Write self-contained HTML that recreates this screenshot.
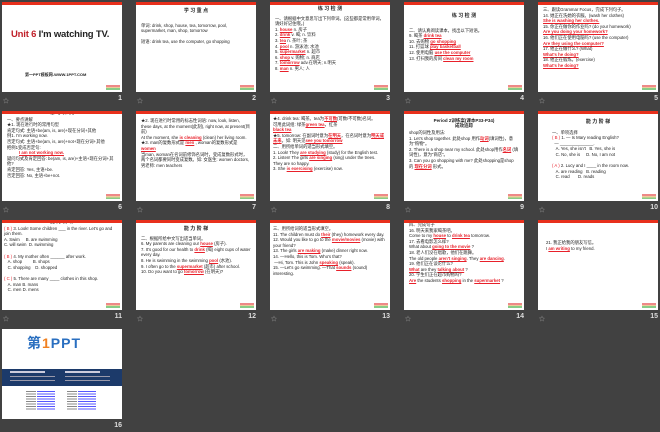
<!DOCTYPE html>
<html><head><meta charset="utf-8"><style>
*{margin:0;padding:0;box-sizing:border-box}
body{width:660px;height:432px;background:#414141;position:relative;overflow:hidden;font-family:"Liberation Sans","Noto Sans CJK SC",sans-serif}
.s{position:absolute;width:120px;height:90px;background:#fff;overflow:hidden;font-size:4.3px;line-height:5.6px;color:#222}
.s.r::before{content:"";position:absolute;left:0;top:0;width:120px;height:3px;background:#e8301c}
.n{position:absolute;color:#ddd;font-size:7px;font-weight:bold;width:20px;text-align:right}
.st{position:absolute;color:#aaa;font-size:6px}
.t{text-align:center;font-weight:bold;font-size:5px;margin-top:7px}
.c{padding:0 5px}
.red{color:#e8202a;font-weight:bold;text-decoration:underline}
.lg{position:absolute;right:2px;bottom:2px;width:14px;height:7px;background:linear-gradient(#fff 0 30%,#e88 30% 55%,#ec9 55% 75%,#8c8 75%)}
</style></head><body>

<!-- row 1 -->
<div class="s r" style="left:2px;top:2px">
<div style="position:absolute;left:9px;top:27px;font-size:9.5px;font-weight:bold;line-height:12px;letter-spacing:-.2px"><span style="color:#c0202a">Unit 6</span> I'm watching TV.</div>
<div style="position:absolute;left:23px;top:70px;font-size:4px;font-weight:bold">第一PPT模板网-WWW.1PPT.COM</div><div class="lg"></div></div>
<div class="s r" style="left:136px;top:2px"><div class="t">学 习 重 点</div>
<div class="c" style="margin-top:8px">单词: drink, shop, house, tea, tomorrow, pool, supermarket, man, shop, tomorrow</div>
<div class="c" style="margin-top:5px">短语: drink tea, use the computer, go shopping</div><div class="lg"></div></div>
<div class="s r" style="left:270px;top:2px"><div class="t" style="margin-top:5px">练 习 检 测</div>
<div class="c" style="margin-top:3px">一、请根据中文意思写出下列单词。(这些都是常用单词，请好好记住哦。)<br>1. <span class="red">house</span> n. 房子<br>2. <span class="red">drink</span> v. 喝; n. 饮料<br>3. <span class="red">tea</span> n. 茶叶; 茶<br>4. <span class="red">pool</span> n. 游泳池; 水池<br>5. <span class="red">supermarket</span> n. 超市<br>6. <span class="red">shop</span> v. 购物; n. 商店<br>7. <span class="red">tomorrow</span> adv.在明天; n.明天<br>8. <span class="red">man</span> n. 男人; 人</div><div class="lg"></div></div>
<div class="s r" style="left:404px;top:2px"><div class="t" style="margin-top:12px">练 习 检 测</div>
<div class="c" style="margin-top:8px">二、请认真阅读课本，找出以下短语。<br>9. 喝茶 <span class="red">drink tea</span><br>10. 去购物 <span class="red">go shopping</span><br>11. 打篮球 <span class="red">play basketball</span><br>12. 使用电脑 <span class="red">use the computer</span><br>13. 打扫我的房间 <span class="red">clean my room</span></div><div class="lg"></div></div>
<div class="s r" style="left:538px;top:2px"><div class="c" style="margin-top:5px">三、跟读Grammar Focus，完成下列句子。<br>14. 她正在洗她的衣服。(wash her clothes)<br><span class="red">She is washing her clothes.</span><br>15. 你正在做你的作业吗? (do your homework)<br><span class="red">Are you doing your homework?</span><br>16. 他们正在使用电脑吗? (use the computer)<br><span class="red">Are they using the computer?</span><br>17. 他正在做什么? (What)<br><span class="red">What's he doing?</span><br>18. 他正在锻炼。(exercise)<br><span class="red">What's he doing?</span></div><div class="lg"></div></div>

<!-- row 2 -->
<div class="s r" style="left:2px;top:111px"><div class="t" style="margin-top:0">思 考 探 究</div>
<div class="c" style="margin-top:0">一、要点讲解<br>★1. 现在进行时的常用句型<br>肯定句式: 主语+be(am, is, are)+现在分词+其他<br>例1. I'm working now.<br>否定句式: 主语+be(am, is, are)+not+现在分词+其他<br>把例1变成否定句:<br><span class="red" style="margin-left:12px">I am not working now.</span><br>疑问句式及肯定回答: be(am, is, are)+主语+现在分词+其他?<br>肯定回答: Yes, 主语+be.<br>否定回答: No, 主语+be+not.</div><div class="lg"></div></div>
<div class="s r" style="left:136px;top:111px"><div class="c" style="margin-top:7px">★2. 现在进行时常用的标志性词语: now, look, listen, these days, at the moment(此刻), right now, at present(目前)<br>At the moment, she <span class="red">is cleaning</span> (clean) her living room.<br>★3. man的复数形式是 <span class="red">men</span> , woman的复数形式是 <span class="red">women</span><br>当man, woman在名词前修饰名词时，变成复数形式时，两个名词都要同时变成复数。如: 女医生: women doctors, 男老师: men teachers</div><div class="lg"></div></div>
<div class="s r" style="left:270px;top:111px"><div class="c" style="margin-top:5px;padding-left:3px">★4. drink tea: 喝茶。tea为<span class="red">不可数</span>(可数/不可数)名词。<br>可用此词组: 绿茶<span class="red">green tea</span>，红茶<br><span class="red">black tea</span><br>★5. tomorrow: 在副词时意为<span class="red">在明天</span>，在名词时意为<span class="red">明天或未来</span>。如: 明天见<span class="red">see you tomorrow</span><br>二、用所给单词的适当形式填空。<br>1. Look! They <span class="red">are studying</span> (study) for the English test.<br>2. Listen! The girls <span class="red">are singing</span> (sing) under the trees. They are so happy.<br>3. She <span class="red">is exercising</span> (exercise) now.</div><div class="lg"></div></div>
<div class="s r" style="left:404px;top:111px"><div class="t" style="margin-top:7px;font-size:4.5px;line-height:5px">Period 2训练案(课本P33-P34)<br>成效追踪</div>
<div class="c" style="margin-top:2px">shop的词性及用法:<br>1. Let's shop together. 此处shop 用作<span class="red">动词</span>(填词性)，意为"购物"。<br>2. There is a shop near my school. 此处shop用作<span class="red">名词</span> (填词性)，意为"商店"。<br>3. Can you go shopping with me? 此处shopping是shop 的 <span class="red">现在分词</span> 形式。</div><div class="lg"></div></div>
<div class="s r" style="left:538px;top:111px"><div class="t" style="margin-top:9px">能 力 阶 梯</div>
<div class="c" style="margin-top:4px;padding-left:14px">一、单项选择<br><span style="color:#e8202a">( B )</span> 1. — Is Mary reading English?<br>&nbsp;&nbsp;— ______________.<br>&nbsp;&nbsp;&nbsp;A. Yes, she isn't &nbsp;&nbsp;B. Yes, she is<br>&nbsp;&nbsp;&nbsp;C. No, she is &nbsp;&nbsp;&nbsp;&nbsp;D. No, I am not<br><br><span style="color:#e8202a">( A )</span> 2. Lucy and I ____ in the room now.<br>&nbsp;&nbsp;&nbsp;A. are reading &nbsp;&nbsp;B. reading<br>&nbsp;&nbsp;&nbsp;C. read &nbsp;&nbsp;&nbsp;&nbsp;&nbsp;&nbsp;D. reads</div><div class="lg"></div></div>

<!-- row 3 -->
<div class="s r" style="left:2px;top:220px"><div class="t" style="margin-top:0">能 力 阶 梯</div>
<div class="c" style="padding-left:2px;margin-top:0"><span style="color:#e8202a">( B )</span> 3. Look! Some children ___ in the river. Let's go and join them.<br>A. Swim &nbsp;&nbsp;&nbsp;&nbsp;B. are swimming<br>C. will swim &nbsp;D. swimming<br><br><span style="color:#e8202a">( B )</span> 4. My mother often ______ after work.<br>&nbsp;&nbsp;&nbsp;A. shop &nbsp;&nbsp;&nbsp;&nbsp;&nbsp;&nbsp;&nbsp;&nbsp;B. shops<br>&nbsp;&nbsp;&nbsp;C. shopping &nbsp;&nbsp;&nbsp;D. shopped<br><br><span style="color:#e8202a">( C )</span> 5. There are many ____ clothes in this shop.<br>&nbsp;&nbsp;&nbsp;A. man B. mans<br>&nbsp;&nbsp;&nbsp;C. men D. mens</div><div class="lg"></div></div>
<div class="s r" style="left:136px;top:220px"><div class="t">能 力 阶 梯</div>
<div class="c" style="margin-top:3px">二、根据所给中文写出适当单词。<br>6. My parents are cleaning our <span class="red">house</span> (房子).<br>7. It's good for our health to <span class="red">drink</span> (喝) eight cups of water every day.<br>8. He is swimming in the swimming <span class="red">pool</span> (水池).<br>9. I often go to the <span class="red">supermarket</span> (超市) after school.<br>10. Do you want to go <span class="red">tomorrow</span> (在明天)?</div><div class="lg"></div></div>
<div class="s r" style="left:270px;top:220px"><div class="c" style="margin-top:6px;padding-left:3px">三、用所给词的适当形式填空。<br>11. The children must do <span class="red">their</span> (they) homework every day.<br>12. Would you like to go to the <span class="red">movie/movies</span> (movie) with your friend?<br>13. The girls <span class="red">are making</span> (make) dinner right now.<br>14. —Hello, this is Tom. Who's that?<br>&nbsp;—Hi, Tom. This is John <span class="red">speaking</span> (speak).<br>15. —Let's go swimming. —That <span class="red">sounds</span> (sound) interesting.</div><div class="lg"></div></div>
<div class="s r" style="left:404px;top:220px"><div class="c" style="margin-top:2px">四、完成句子<br>16. 明天来我家喝茶吧。<br>Come to my <span class="red">house</span> to <span class="red">drink tea</span> tomorrow.<br>17. 去看电影怎么样?<br>What about <span class="red">going to the movie</span> ?<br>18. 老人们没在唱歌，他们在跳舞。<br>The old people <span class="red">aren't singing</span>. They <span class="red">are dancing</span>.<br>19. 他们正在谈论什么?<br><span class="red">What</span> are they <span class="red">talking about</span> ?<br>20. 学生们正在超市购物吗?<br><span class="red">Are</span> the students <span class="red">shopping</span> in the <span class="red">supermarket</span> ?</div><div class="lg"></div></div>
<div class="s r" style="left:538px;top:220px"><div class="c" style="margin-top:20px;padding-left:8px">21. 我正给我的朋友写信。<br>I <span class="red">am writing</span> to my friend.</div><div class="lg"></div></div>

<!-- row 4 -->
<div class="s" style="left:2px;top:329px">
<div style="position:absolute;left:25px;top:12px;font-size:14px;font-weight:bold;color:#2a6fc0;letter-spacing:1px">第<span style="color:#f08020">1</span>PPT</div>
<div style="position:absolute;left:0;top:40px;width:120px;height:17px;background:#1c3a6a"></div>
<div style="position:absolute;left:8px;top:42px;width:35px;height:2px;background:#ccd"></div>
<div style="position:absolute;left:63px;top:42px;width:35px;height:2px;background:#ccd"></div>
<div style="position:absolute;left:8px;top:47px;width:45px;height:1px;background:#99a"></div>
<div style="position:absolute;left:63px;top:47px;width:45px;height:1px;background:#99a"></div>
<div style="position:absolute;left:8px;top:51px;width:45px;height:1px;background:#99a"></div>
<div style="position:absolute;left:63px;top:51px;width:45px;height:1px;background:#99a"></div>
<div style="position:absolute;left:24px;top:62px;width:10px;height:19px;background:repeating-linear-gradient(#888 0 1px,#fff 1px 2.5px)"></div>
<div style="position:absolute;left:35px;top:62px;width:18px;height:19px;background:repeating-linear-gradient(#55f 0 1px,#fff 1px 2.5px)"></div>
<div style="position:absolute;left:65px;top:62px;width:10px;height:19px;background:repeating-linear-gradient(#888 0 1px,#fff 1px 2.5px)"></div>
<div style="position:absolute;left:76px;top:62px;width:18px;height:19px;background:repeating-linear-gradient(#55f 0 1px,#fff 1px 2.5px)"></div>
</div>

<!-- numbers -->
<div class="n" style="left:102px;top:95px">1</div><div class="n" style="left:236px;top:95px">2</div><div class="n" style="left:370px;top:95px">3</div><div class="n" style="left:504px;top:95px">4</div><div class="n" style="left:638px;top:95px">5</div>
<div class="n" style="left:102px;top:204px">6</div><div class="n" style="left:236px;top:204px">7</div><div class="n" style="left:370px;top:204px">8</div><div class="n" style="left:504px;top:204px">9</div><div class="n" style="left:638px;top:204px">10</div>
<div class="n" style="left:102px;top:313px">11</div><div class="n" style="left:236px;top:313px">12</div><div class="n" style="left:370px;top:313px">13</div><div class="n" style="left:504px;top:313px">14</div><div class="n" style="left:638px;top:313px">15</div>
<div class="n" style="left:102px;top:422px">16</div>
<div class="st" style="left:3px;top:96px">☆</div><div class="st" style="left:137px;top:96px">☆</div><div class="st" style="left:271px;top:96px">☆</div><div class="st" style="left:405px;top:96px">☆</div><div class="st" style="left:539px;top:96px">☆</div>
<div class="st" style="left:3px;top:205px">☆</div><div class="st" style="left:137px;top:205px">☆</div><div class="st" style="left:271px;top:205px">☆</div><div class="st" style="left:405px;top:205px">☆</div><div class="st" style="left:539px;top:205px">☆</div>
<div class="st" style="left:3px;top:314px">☆</div><div class="st" style="left:137px;top:314px">☆</div><div class="st" style="left:271px;top:314px">☆</div><div class="st" style="left:405px;top:314px">☆</div><div class="st" style="left:539px;top:314px">☆</div>
</body></html>
